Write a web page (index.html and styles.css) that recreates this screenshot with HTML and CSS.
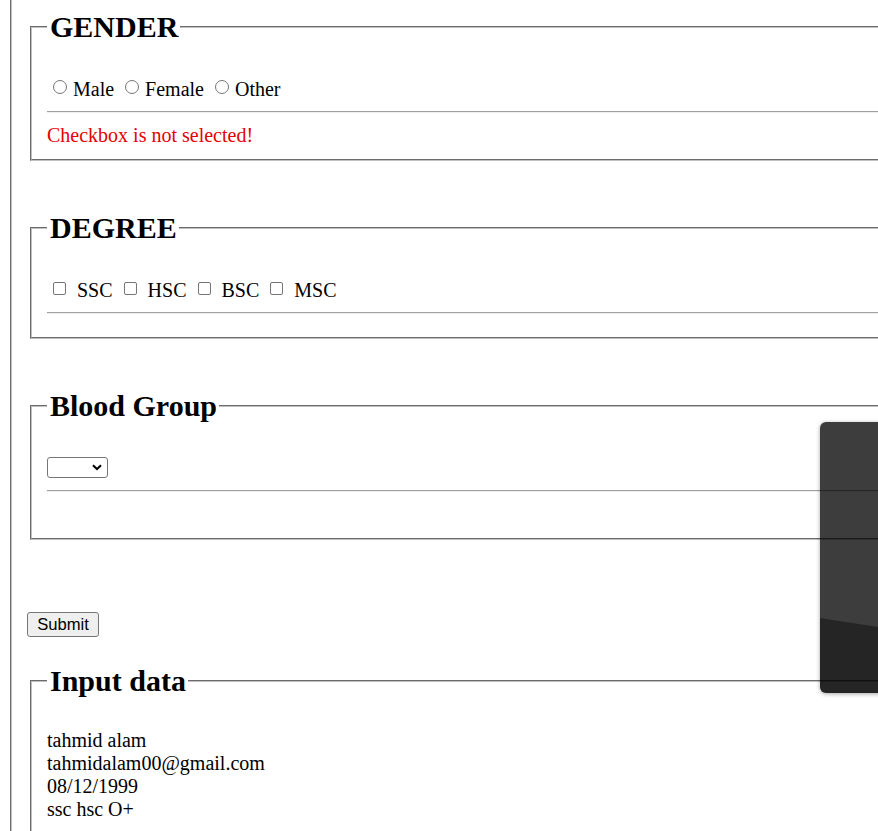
FILE: index.html
```html
<!DOCTYPE html>
<html lang="en">
<head>
<meta charset="utf-8">
<title>Form</title>
<link rel="stylesheet" href="styles.css">
</head>
<body>
<div class="outer">
  <fieldset class="group">
    <legend>GENDER</legend>
    <div class="row"><input class="radio" type="radio" name="gender">Male <input class="radio" type="radio" name="gender">Female <input class="radio" type="radio" name="gender">Other</div>
    <hr>
    <div class="error">Checkbox is not selected!</div>
  </fieldset>

  <fieldset class="group">
    <legend>DEGREE</legend>
    <div class="row"><input class="check" type="checkbox"> SSC <input class="check" type="checkbox"> HSC <input class="check" type="checkbox"> BSC <input class="check" type="checkbox"> MSC</div>
    <hr>
  </fieldset>

  <fieldset class="group group-last">
    <legend>Blood Group</legend>
    <div class="row"><span class="select-wrap"><select class="select" aria-label="Blood group"></select><svg class="chevron" width="10" height="7" viewBox="0 0 10 7"><path d="M1 1.2 L5 5 L9 1.2" fill="none" stroke="#000" stroke-width="2"/></svg></span></div>
    <hr>
    <div class="error">&nbsp;</div>
  </fieldset>

  <button class="submit" type="button">Submit</button>

  <fieldset class="group data">
    <legend>Input data</legend>
    <div class="lines">tahmid alam<br>tahmidalam00@gmail.com<br>08/12/1999<br>ssc hsc O+</div>
  </fieldset>
</div>
<div class="overlay"></div>
</body>
</html>
```

FILE: styles.css
```css
html, body {
  margin: 0;
  padding: 0;
  overflow: hidden;
  height: 831px;
  background: #fff;
}
body {
  position: relative;
  font-family: "Liberation Serif", "Times New Roman", serif;
  font-size: 20px;
  line-height: 23px;
  color: #000;
}
.outer {
  margin-left: 10px;
  padding: 10px 0 0 15px;
  border-left: 2px groove #c0c0c0;
  width: 1200px;
  min-height: 900px;
}
.group {
  margin: 0 0 50px 3px;
  padding: 0 15px 13px;
  border: 2px groove #c0c0c0;
  width: 1000px;
  min-width: 0;
}
.group legend {
  font-size: 30px;
  font-weight: bold;
  line-height: 34px;
  padding: 0 2px 0 3px;
}
.row {
  margin-top: 34px;
  height: 23px;
  white-space: nowrap;
}
.radio,
.check {
  appearance: none;
  -webkit-appearance: none;
  box-sizing: border-box;
  display: inline-block;
  background: #fff;
  border: 1px solid #767676;
  vertical-align: 2px;
}
.radio {
  width: 14px;
  height: 14px;
  margin: 0 6px 0 6px;
  border-radius: 50%;
}
.check {
  width: 13px;
  height: 13px;
  margin: 0 6px 0 6px;
  border-radius: 2px;
}
hr {
  margin: 10px 0;
  height: 0;
  border: 0;
  border-top: 1px solid #a0a0a0;
  border-bottom: 1px solid #eeeeee;
}
.error {
  color: #e60000;
  padding-top: 1px;
  height: 22px;
}
.group-last {
  margin-bottom: 72px;
}
.select-wrap {
  position: relative;
  display: inline-block;
  vertical-align: top;
  width: 61px;
  height: 21px;
}
.select {
  appearance: none;
  -webkit-appearance: none;
  display: block;
  box-sizing: border-box;
  width: 61px;
  height: 21px;
  margin: 0;
  border: 1px solid #767676;
  border-radius: 3px;
  background: #fff;
}
.chevron {
  position: absolute;
  left: 45px;
  top: 7px;
  pointer-events: none;
}
.submit {
  display: block;
  margin: 0 0 27px 0;
  box-sizing: border-box;
  height: 25px;
  width: 72px;
  padding: 0;
  font-family: "Liberation Sans", Arial, sans-serif;
  font-size: 16.6px;
  line-height: 19px;
  color: #000;
  background: #efefef;
  border: 1px solid #767676;
  border-radius: 3px;
}
.data {
  margin-bottom: 0;
  min-height: 300px;
}
.lines {
  margin-top: 31px;
}
.overlay {
  position: absolute;
  left: 820px;
  top: 422px;
  width: 200px;
  height: 271px;
  border-radius: 6px;
  overflow: hidden;
  background: rgba(0, 0, 0, 0.76);
  box-shadow: 0 1px 4px rgba(0, 0, 0, 0.35);
}
.overlay::after {
  content: "";
  position: absolute;
  inset: 0;
  background: rgba(0, 0, 0, 0.38);
  clip-path: polygon(0 196px, 200px 227px, 200px 100%, 0 100%);
}
```
